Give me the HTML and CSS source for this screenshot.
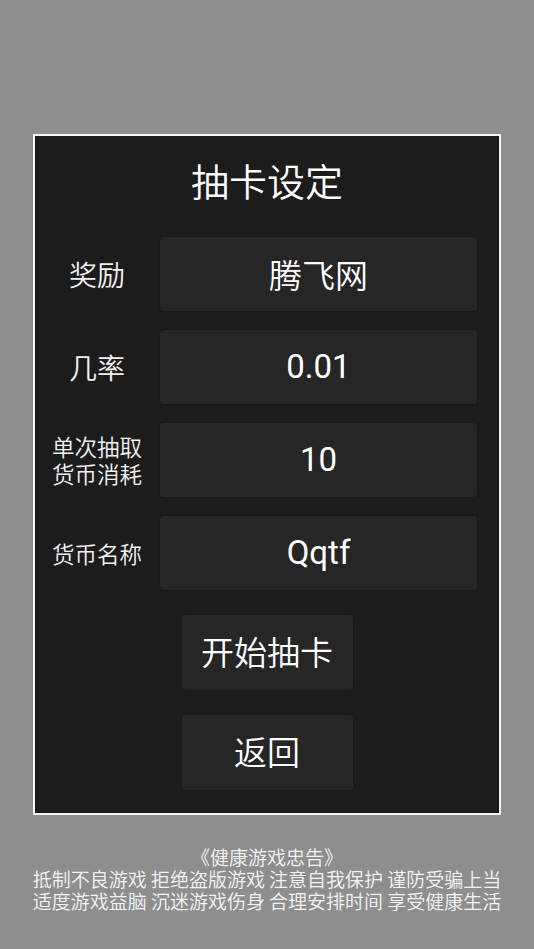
FILE: index.html
```html
<!DOCTYPE html>
<html lang="zh">
<head>
<meta charset="utf-8">
<link rel="stylesheet" href="styles.css">
</head>
<body>
<div class="panel">
  <div class="title">抽卡设定</div>
  <div class="rows">
    <div class="row"><div class="label big">奖励</div><div class="field">腾飞网</div></div>
    <div class="row"><div class="label big">几率</div><div class="field num">0.01</div></div>
    <div class="row"><div class="label small"><span class="ln">单次抽取</span><span class="ln">货币消耗</span></div><div class="field num">10</div></div>
    <div class="row"><div class="label small">货币名称</div><div class="field num">Qqtf</div></div>
  </div>
  <div class="buttons">
    <div class="btn">开始抽卡</div>
    <div class="btn">返回</div>
  </div>
</div>
<div class="footer">
  <div class="fl">《健康游戏忠告》</div>
  <div class="fl">抵制不良游戏 拒绝盗版游戏 注意自我保护 谨防受骗上当</div>
  <div class="fl">适度游戏益脑 沉迷游戏伤身 合理安排时间 享受健康生活</div>
</div>
</body>
</html>
```

FILE: styles.css
```css
html, body {
  margin: 0;
  padding: 0;
  background: #8e8e8e;
}
body {
  width: 534px;
  height: 949px;
  font-family: "Noto Sans CJK SC", "Noto Sans", sans-serif;
  font-weight: 350;
  color: #ffffff;
  padding-top: 134px;
  box-sizing: border-box;
}
.panel {
  margin-left: 33px;
  width: 468px;
  height: 681px;
  box-sizing: border-box;
  border: 2px solid #f4f4f4;
  background: #1c1c1c;
  display: flex;
  flex-direction: column;
  align-items: stretch;
}
.title {
  margin-top: 20px;
  height: 48px;
  line-height: 48px;
  font-size: 38px;
  text-align: center;
}
.rows {
  margin-top: 32px;
  display: flex;
  flex-direction: column;
  gap: 17px;
}
.row {
  display: grid;
  grid-template-columns: 124px 319px;
  height: 76px;
}
.label {
  display: flex;
  flex-direction: column;
  align-items: center;
  justify-content: center;
  text-align: center;
  color: #f2f2f2;
}
.label.big {
  font-size: 28px;
}
.label.small {
  font-size: 22.5px;
  line-height: 27px;
}
.ln {
  display: block;
  height: 27px;
}
.field, .btn {
  background: #262626;
  border: 1px solid #181818;
  border-radius: 4px;
  box-sizing: border-box;
  display: flex;
  align-items: center;
  justify-content: center;
  font-size: 33px;
  color: #ffffff;
  font-family: "Noto Sans CJK SC", sans-serif;
  font-weight: 350;
}
.field {
  padding-bottom: 1px;
}
.field.num {
  font-family: "Roboto", sans-serif;
  font-weight: 400;
}
.buttons {
  margin-top: 23px;
  display: flex;
  flex-direction: column;
  align-items: center;
  gap: 23px;
}
.btn {
  width: 173px;
  height: 77px;
  padding-bottom: 3px;
}
.footer {
  margin-top: 31px;
  text-align: center;
  font-size: 19px;
  line-height: 22px;
  color: #f4f4f4;
}
.fl {
  height: 22px;
}
```
